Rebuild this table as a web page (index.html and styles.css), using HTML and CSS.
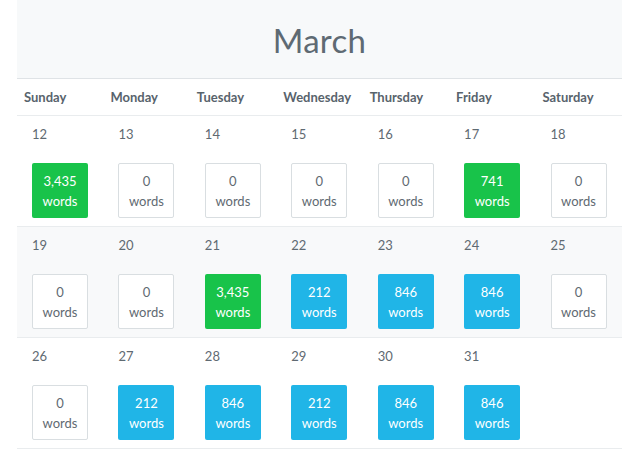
FILE: index.html
```html
<!DOCTYPE html>
<html>
<head>
<meta charset="utf-8">
<link rel="stylesheet" href="styles.css">
</head>
<body>
<div class="calendar">
  <div class="month-header"><h1 class="month-title">March</h1></div>
  <table class="cal-table">
    <thead>
      <tr>
        <th>Sunday</th><th>Monday</th><th>Tuesday</th><th>Wednesday</th><th>Thursday</th><th>Friday</th><th>Saturday</th>
      </tr>
    </thead>
    <tbody>
      <tr>
        <td><div class="day">12</div><div class="wc green"><span>3,435</span><span>words</span></div></td>
        <td><div class="day">13</div><div class="wc empty"><span>0</span><span>words</span></div></td>
        <td><div class="day">14</div><div class="wc empty"><span>0</span><span>words</span></div></td>
        <td><div class="day">15</div><div class="wc empty"><span>0</span><span>words</span></div></td>
        <td><div class="day">16</div><div class="wc empty"><span>0</span><span>words</span></div></td>
        <td><div class="day">17</div><div class="wc green"><span>741</span><span>words</span></div></td>
        <td><div class="day">18</div><div class="wc empty"><span>0</span><span>words</span></div></td>
      </tr>
      <tr class="striped">
        <td><div class="day">19</div><div class="wc empty"><span>0</span><span>words</span></div></td>
        <td><div class="day">20</div><div class="wc empty"><span>0</span><span>words</span></div></td>
        <td><div class="day">21</div><div class="wc green"><span>3,435</span><span>words</span></div></td>
        <td><div class="day">22</div><div class="wc blue"><span>212</span><span>words</span></div></td>
        <td><div class="day">23</div><div class="wc blue"><span>846</span><span>words</span></div></td>
        <td><div class="day">24</div><div class="wc blue"><span>846</span><span>words</span></div></td>
        <td><div class="day">25</div><div class="wc empty"><span>0</span><span>words</span></div></td>
      </tr>
      <tr>
        <td><div class="day">26</div><div class="wc empty"><span>0</span><span>words</span></div></td>
        <td><div class="day">27</div><div class="wc blue"><span>212</span><span>words</span></div></td>
        <td><div class="day">28</div><div class="wc blue"><span>846</span><span>words</span></div></td>
        <td><div class="day">29</div><div class="wc blue"><span>212</span><span>words</span></div></td>
        <td><div class="day">30</div><div class="wc blue"><span>846</span><span>words</span></div></td>
        <td><div class="day">31</div><div class="wc blue"><span>846</span><span>words</span></div></td>
        <td></td>
      </tr>
    </tbody>
  </table>
</div>
</body>
</html>
```
FILE: styles.css
```css
html, body {
  margin: 0;
  padding: 0;
  background: #ffffff;
}
body {
  font-family: Lato, "Open Sans", "Liberation Sans", sans-serif;
  color: #5f6a72;
  font-size: 13px;
}
.calendar {
  width: 605px;
  margin-left: 17px;
}
.month-header {
  background: #f7f9fa;
  height: 78px;
  border-bottom: 1px solid #dfe3e6;
  display: flex;
  align-items: center;
  justify-content: center;
}
.month-title {
  margin: 0;
  font-weight: 400;
  font-size: 33px;
  color: #5e6a73;
  letter-spacing: 0.3px;
  position: relative;
  top: 1px;
}
.cal-table {
  width: 605px;
  border-collapse: collapse;
  table-layout: fixed;
}
.cal-table th {
  text-align: left;
  font-weight: 700;
  font-size: 13px;
  color: #58636c;
  padding: 0 0 0 7px;
  height: 36px;
  border-bottom: 1px solid #e9ecee;
}
.cal-table td {
  vertical-align: top;
  padding: 8px 15px 8px 15px;
  height: 102px;
  box-sizing: border-box;
  border-bottom: 1px solid #e9ecee;
}
.cal-table tr.striped td {
  background: #f8f9fa;
}
.day {
  line-height: 20px;
  font-size: 13px;
  color: #5f6a72;
  margin-bottom: 19px;
}
.wc {
  width: 56px;
  height: 55px;
  box-sizing: border-box;
  border-radius: 2px;
  display: flex;
  flex-direction: column;
  align-items: center;
  justify-content: center;
  line-height: 20px;
  font-size: 13px;
}
.wc span { display: block; }
.wc.empty {
  background: #ffffff;
  border: 1px solid #d9dee1;
  color: #5f6a72;
}
.wc.green {
  background: #18c34a;
  color: #ffffff;
}
.wc.blue {
  background: #20b5e7;
  color: #ffffff;
}
```
